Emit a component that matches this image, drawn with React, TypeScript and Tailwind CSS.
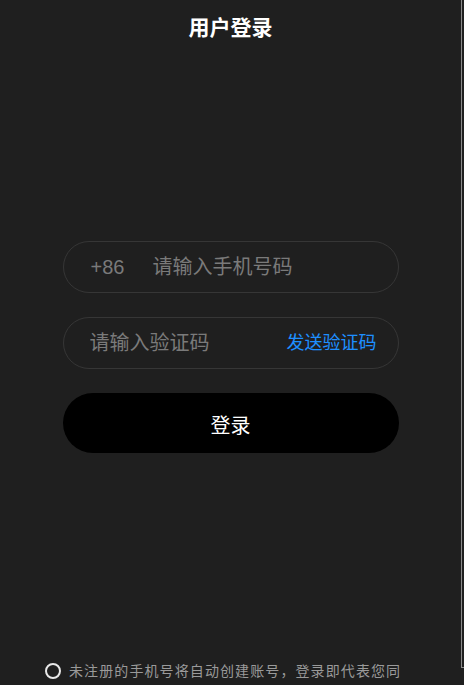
import React from 'react';

const App: React.FC = () => {
  return (
    <div
      className="flex min-h-[685px] w-full bg-[#1f1f1f] overflow-hidden"
      style={{ fontFamily: '"Liberation Sans", "Noto Sans CJK SC", sans-serif' }}
    >
      <div className="w-[461px] shrink-0">
        <div className="h-14 flex items-center justify-center">
          <h1 className="text-[21px] font-bold text-white">用户登录</h1>
        </div>

        <div className="w-[336px] mx-auto mt-[185px] flex flex-col gap-6">
          <div className="h-[52px] rounded-full border border-[#363636] flex items-center pl-[27px] pr-6">
            <span className="text-[20px] text-[#7a7a7a]">+86</span>
            <input
              className="ml-[28px] flex-1 min-w-0 bg-transparent outline-none text-[20px] text-white placeholder:text-[#7a7a7a]"
              placeholder="请输入手机号码"
            />
          </div>

          <div className="h-[52px] rounded-full border border-[#363636] flex items-center pl-[26px] pr-[21px]">
            <input
              className="flex-1 min-w-0 bg-transparent outline-none text-[20px] text-white placeholder:text-[#7a7a7a]"
              placeholder="请输入验证码"
            />
            <button className="text-[18px] text-[#1e8fff]">发送验证码</button>
          </div>

          <button className="h-[60px] pt-[6px] rounded-full bg-black text-white text-[20px]">登录</button>
        </div>

        <div className="mt-[206px] pl-[45px] flex items-start gap-2">
          <span className="mt-1 w-4 h-4 shrink-0 rounded-full border-2 border-[#e8e8e8]" />
          <p className="w-[342px] text-[14px] leading-6 tracking-[1.1px] text-[#9a9a9a]">
            未注册的手机号将自动创建账号，登录即代表您同意《用户协议》和《隐私政策》
          </p>
        </div>
      </div>
      <div className="w-[3px] h-[668px] border-l border-b border-[#8a8a8a]" />
    </div>
  );
};

export default App;
